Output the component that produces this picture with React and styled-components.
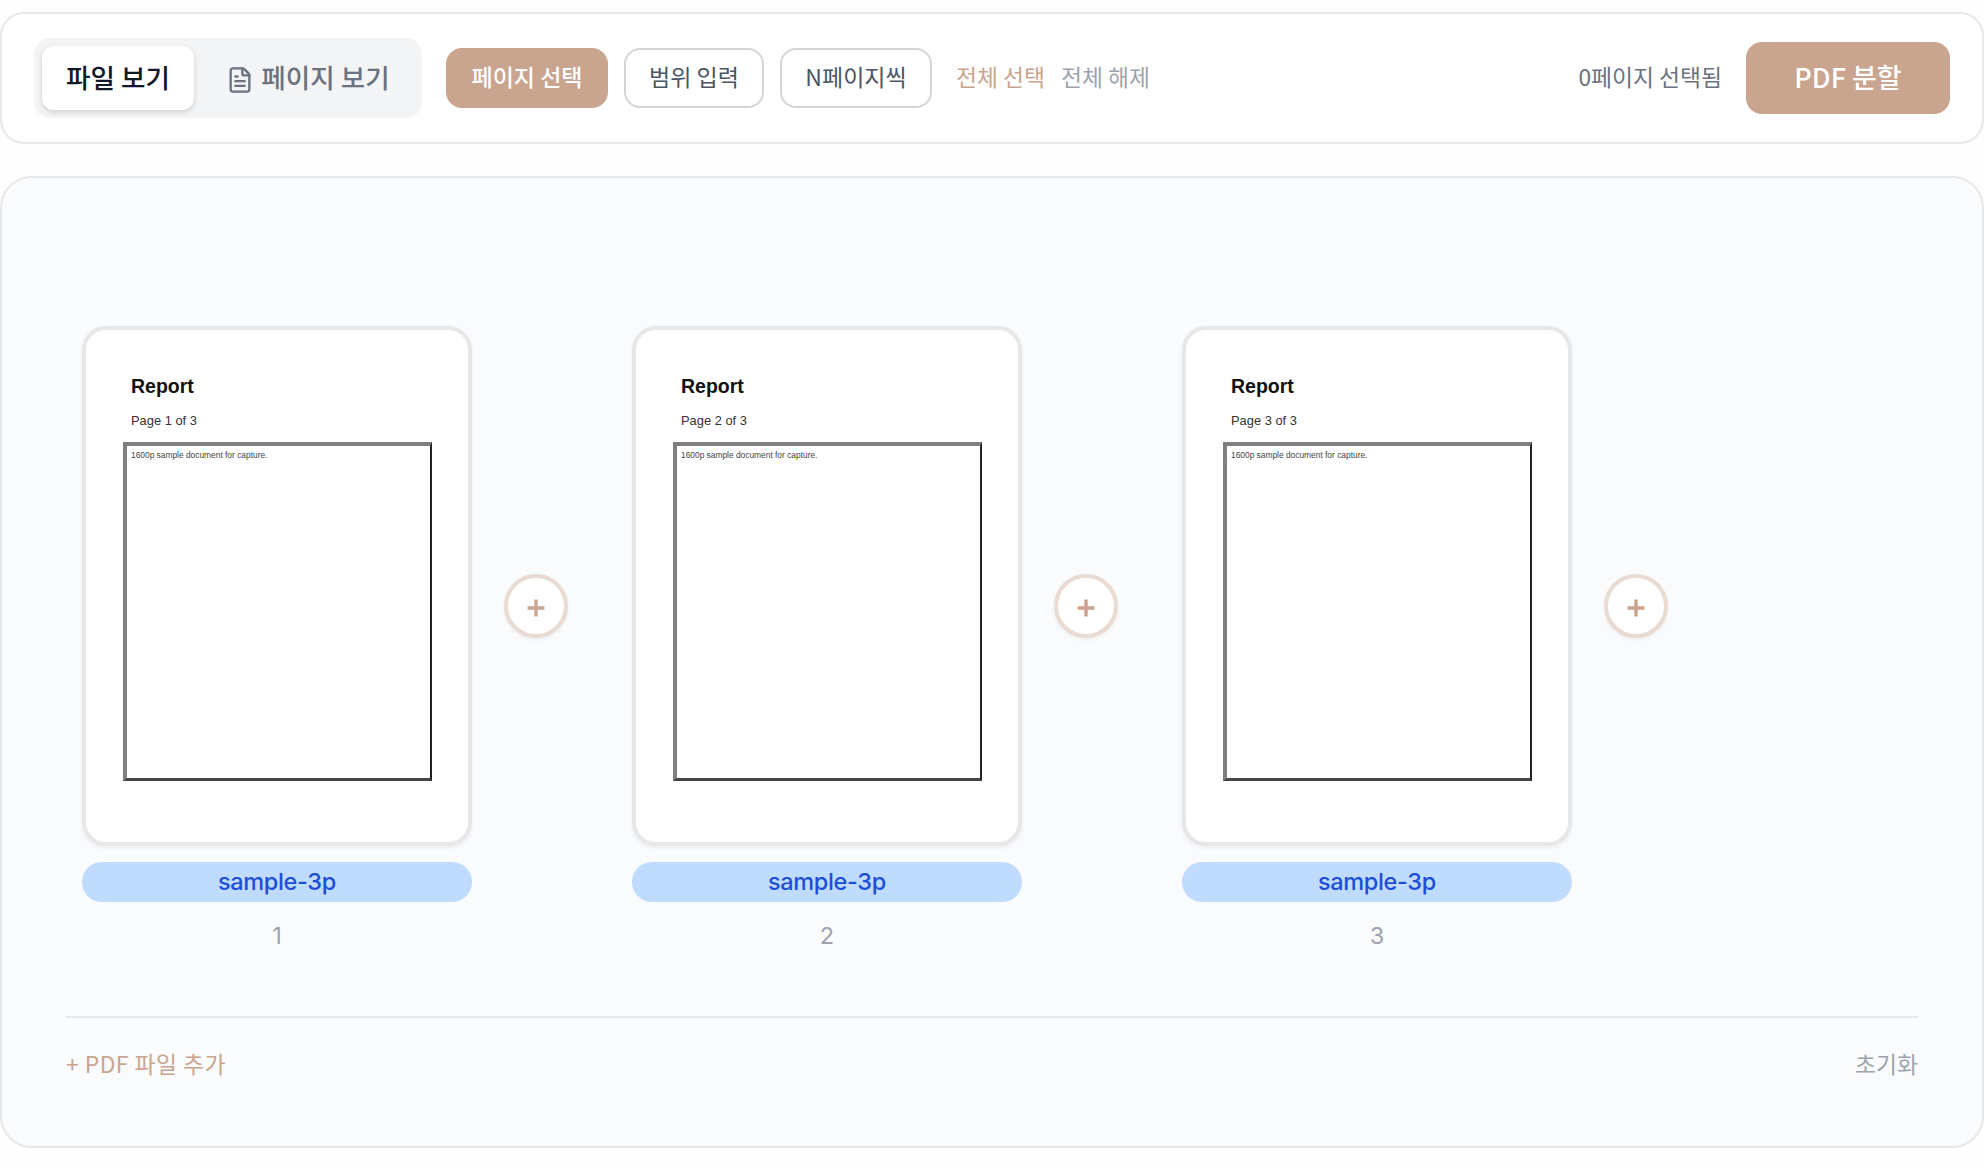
import React from "react";
import styled, { createGlobalStyle, css } from "styled-components";
import { FileText } from "lucide-react";

const Global = createGlobalStyle`
  *, *::before, *::after { box-sizing: border-box; }
  body {
    margin: 0;
    background: #fefefe;
    font-family: Inter, "Noto Sans CJK KR", "Noto Sans", sans-serif;
    -webkit-font-smoothing: antialiased;
  }
  button { font: inherit; margin: 0; cursor: pointer; }
`;

const Page = styled.main`
  width: 1984px;
  height: 1168px;
  padding-top: 12px;
  display: flex;
  flex-direction: column;
  gap: 32px;
  overflow: hidden;
`;

const Toolbar = styled.header`
  height: 132px;
  padding: 0 32px;
  border: 2px solid #e5e7e9;
  border-radius: 24px;
  background: #fff;
  display: flex;
  align-items: center;
  justify-content: space-between;
`;

const Group = styled.div`
  display: flex;
  align-items: center;
  gap: ${(p) => p.$gap}px;
`;

const Label = styled.span`
  display: block;
  white-space: nowrap;
  font-family: "Noto Sans CJK KR", sans-serif;
  letter-spacing: ${(p) => p.$track || 0}px;
  padding-bottom: 3px;
`;

const Segments = styled.div`
  display: flex;
  gap: 8px;
  height: 80px;
  padding: 8px;
  border-radius: 16px;
  background: #f3f4f6;
`;

const Segment = styled.button`
  display: flex;
  align-items: center;
  justify-content: center;
  gap: 7px;
  width: ${(p) => p.$w}px;
  height: 64px;
  padding: 0;
  border: 0;
  border-radius: 12px;
  background: transparent;
  color: #6b7280;
  font-size: 26.6px;
  line-height: 40px;
  font-weight: 500;
  svg { margin-top: 3px; }
  ${(p) =>
    p.$active &&
    css`
      background: #fff;
      color: #111827;
      box-shadow: 0 2px 6px rgba(0, 0, 0, 0.1), 0 2px 4px rgba(0, 0, 0, 0.06);
    `}
`;

const Mode = styled.button`
  width: ${(p) => p.$w}px;
  height: 60px;
  padding: 0 0 1px;
  display: flex;
  align-items: center;
  justify-content: center;
  border: 2px solid ${(p) => (p.$active ? "#c9a48e" : "#d1d5d8")};
  border-radius: 16px;
  background: ${(p) => (p.$active ? "#c9a48e" : "#fff")};
  color: ${(p) => (p.$active ? "#fff" : "#4b5563")};
  font-size: 23px;
  line-height: 32px;
  font-weight: ${(p) => (p.$active ? 500 : 400)};
`;

const TextButton = styled.button`
  padding: 0;
  border: 0;
  background: none;
  color: ${(p) => (p.$accent ? "#c9a48e" : "#9ca3af")};
  font-size: 22.8px;
  line-height: 32px;
`;

const Count = styled.div`
  color: #6b7280;
  font-size: 22.8px;
  line-height: 32px;
`;

const Split = styled.button`
  width: 204px;
  height: 72px;
  padding: 0;
  display: flex;
  align-items: center;
  justify-content: center;
  border: 0;
  border-radius: 16px;
  background: #c9a48e;
  color: #fff;
  font-size: 27px;
  line-height: 40px;
  font-weight: 500;
`;

const Panel = styled.section`
  height: 972px;
  padding: 148px 64px 64px;
  border: 2px solid #e5e7e9;
  border-radius: 32px;
  background: #fafbfd;
  display: flex;
  flex-direction: column;
`;

const Pages = styled.div`
  display: flex;
  gap: 64px;
  padding: 0 16px;
`;

const Slot = styled.div`
  display: flex;
  align-items: flex-start;
  gap: 32px;
`;

const Item = styled.div`
  width: 390px;
  display: flex;
  flex-direction: column;
  align-items: center;
`;

const Card = styled.article`
  width: 390px;
  height: 520px;
  padding: 41px 37px;
  border: 4px solid #e5e7e9;
  border-radius: 24px;
  background: #fff;
  box-shadow: 0 2px 4px rgba(0, 0, 0, 0.06);
  font-family: "Liberation Sans", sans-serif;
  color: #111;
`;

const DocTitle = styled.h2`
  margin: 0;
  padding-left: 8px;
  height: 36px;
  font-size: 19.5px;
  line-height: 31px;
  font-weight: 700;
`;

const DocSub = styled.p`
  margin: 0;
  padding-left: 8px;
  height: 35px;
  font-size: 12.9px;
  line-height: 28px;
  color: #333;
`;

const DocFrame = styled.div`
  width: 309px;
  height: 339px;
  padding: 3px 4px;
  border-style: solid;
  border-width: 4px 2px 3px 4px;
  border-color: #7f7f7f #222 #444 #7f7f7f;
  font-size: 8.4px;
  line-height: 12px;
  color: #444;
`;

const Name = styled.div`
  width: 390px;
  height: 40px;
  margin-top: 16px;
  border-radius: 20px;
  background: #bfdbfe;
  color: #1d4ed8;
  font-size: 23.5px;
  letter-spacing: -0.35px;
  line-height: 40px;
  font-weight: 500;
  text-align: center;
`;

const Num = styled.div`
  margin-top: 16px;
  height: 36px;
  color: #9ca3af;
  font-size: 23.5px;
  line-height: 36px;
`;

const Insert = styled.button`
  width: 64px;
  height: 64px;
  margin-top: 248px;
  padding: 3px 0 0;
  display: flex;
  align-items: center;
  justify-content: center;
  border: 4px solid #e9dbd2;
  border-radius: 50%;
  background: #fff;
  box-shadow: 0 2px 4px rgba(0, 0, 0, 0.05);
`;

const Footer = styled.footer`
  margin-top: auto;
  height: 66px;
  padding-top: 30px;
  border-top: 2px solid #e5e7e9;
  display: flex;
  align-items: flex-start;
  justify-content: space-between;
`;

function Plus() {
  return (
    <svg width="18" height="18" viewBox="0 0 18 18">
      <path d="M9 0.5V17.5M0.5 9H17.5" stroke="#c9a48e" strokeWidth="3.4" />
    </svg>
  );
}

export default function App() {
  return (
    <>
      <Global />
      <Page>
        <Toolbar>
          <Group $gap={24}>
            <Segments>
              <Segment $active $w={152}><Label>파일 보기</Label></Segment>
              <Segment $w={212}>
                <FileText size={28} strokeWidth={2} />
                <Label>페이지 보기</Label>
              </Segment>
            </Segments>
            <Group $gap={16}>
              <Mode $active $w={162}><Label>페이지 선택</Label></Mode>
              <Mode $w={140}><Label>범위 입력</Label></Mode>
              <Mode $w={152}><Label>N페이지씩</Label></Mode>
            </Group>
            <Group $gap={16}>
              <TextButton $accent><Label>전체 선택</Label></TextButton>
              <TextButton><Label>전체 해제</Label></TextButton>
            </Group>
          </Group>
          <Group $gap={24}>
            <Count><Label>0페이지 선택됨</Label></Count>
            <Split><Label>PDF 분할</Label></Split>
          </Group>
        </Toolbar>
        <Panel>
          <Pages>
            {[1, 2, 3].map((n) => (
              <Slot key={n}>
                <Item>
                  <Card>
                    <DocTitle>Report</DocTitle>
                    <DocSub>Page {n} of 3</DocSub>
                    <DocFrame>1600p sample document for capture.</DocFrame>
                  </Card>
                  <Name>sample-3p</Name>
                  <Num>{n}</Num>
                </Item>
                <Insert aria-label="추가"><Plus /></Insert>
              </Slot>
            ))}
          </Pages>
          <Footer>
            <TextButton $accent><Label $track={0.5}>+ PDF 파일 추가</Label></TextButton>
            <TextButton><Label>초기화</Label></TextButton>
          </Footer>
        </Panel>
      </Page>
    </>
  );
}
